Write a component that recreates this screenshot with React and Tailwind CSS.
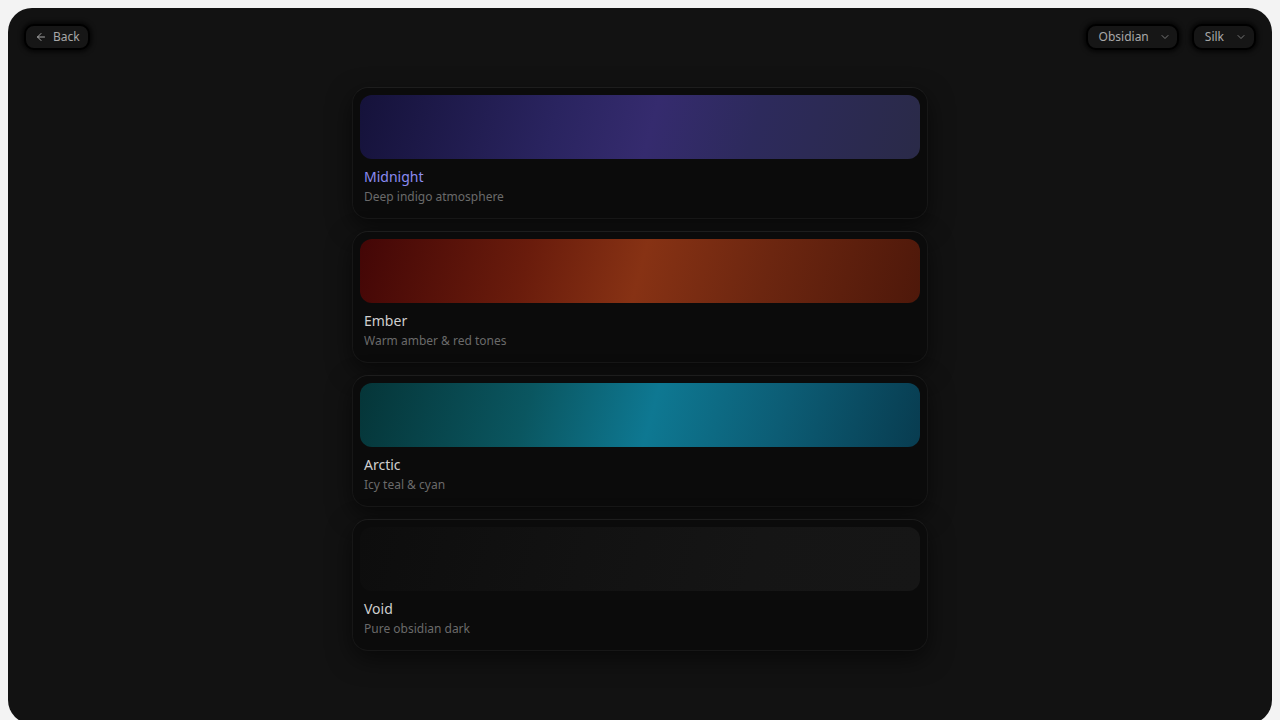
import { ArrowLeft, ChevronDown } from 'lucide-react';

const themes = [
  {
    name: 'Midnight',
    desc: 'Deep indigo atmosphere',
    active: true,
    preview: 'bg-[linear-gradient(105deg,#15123a_0%,#2a2460_35%,#352b6e_52%,#2d2a5c_70%,#2a2a48_100%)]',
  },
  {
    name: 'Ember',
    desc: 'Warm amber & red tones',
    preview: 'bg-[linear-gradient(105deg,#430606_0%,#6a1c0c_30%,#873214_50%,#6c2610_72%,#4e180a_100%)]',
  },
  {
    name: 'Arctic',
    desc: 'Icy teal & cyan',
    preview: 'bg-[linear-gradient(105deg,#053538_0%,#0a5660_30%,#0e7892_52%,#0c5c74_75%,#083c50_100%)]',
  },
  {
    name: 'Void',
    desc: 'Pure obsidian dark',
    preview: 'bg-[linear-gradient(105deg,#0d0d0d_0%,#121212_40%,#151515_70%,#161616_100%)]',
  },
];

const Pill = ({ children, className = '' }) => (
  <button
    className={`flex h-[26px] items-center rounded-[10px] border-2 border-black bg-[#161616] text-xs text-[#a8a8a8] shadow-[0_0_4px_2px_rgba(0,0,0,0.7)] ${className}`}
  >
    {children}
  </button>
);

const ThemeCard = ({ theme }) => (
  <div className="rounded-2xl border border-[#171717] border-t-[#1d1d1d] bg-[#0b0b0b] p-[7px] shadow-[0_8px_24px_rgba(0,0,0,0.55)]">
    <div className={`h-16 rounded-xl ${theme.preview}`}></div>
    <div className="px-1 pt-2 pb-1.5">
      <div className={`text-sm leading-5 ${theme.active ? 'text-[#8b8cf2]' : 'text-[#cfcfcf]'}`}>
        {theme.name}
      </div>
      <div className="mt-0.5 text-xs leading-4 text-[#6a6a6a]">{theme.desc}</div>
    </div>
  </div>
);

export default function App() {
  return (
    <div className="h-screen overflow-hidden bg-[#f3f3f3] px-2 pt-2 font-['Noto_Sans',sans-serif]">
      <div className="h-[716px] rounded-3xl bg-[#121212] p-4">
        {/* Top bar */}
        <div className="flex items-center justify-between">
          <Pill className="gap-1.5 pl-[9px] pr-[8px]">
            <ArrowLeft size={12} strokeWidth={2} />
            <span>Back</span>
          </Pill>
          <div className="flex gap-[13px]">
            <Pill className="gap-[10px] pl-[11px] pr-[6px]">
              <span>Obsidian</span>
              <ChevronDown size={12} strokeWidth={2} className="text-[#777]" />
            </Pill>
            <Pill className="gap-[11px] pl-[11px] pr-[7px]">
              <span>Silk</span>
              <ChevronDown size={12} strokeWidth={2} className="text-[#777]" />
            </Pill>
          </div>
        </div>

        {/* Theme list */}
        <div className="mx-auto mt-[37px] flex w-[576px] flex-col gap-3">
          {themes.map((t) => (
            <ThemeCard key={t.name} theme={t} />
          ))}
        </div>
      </div>
    </div>
  );
}
